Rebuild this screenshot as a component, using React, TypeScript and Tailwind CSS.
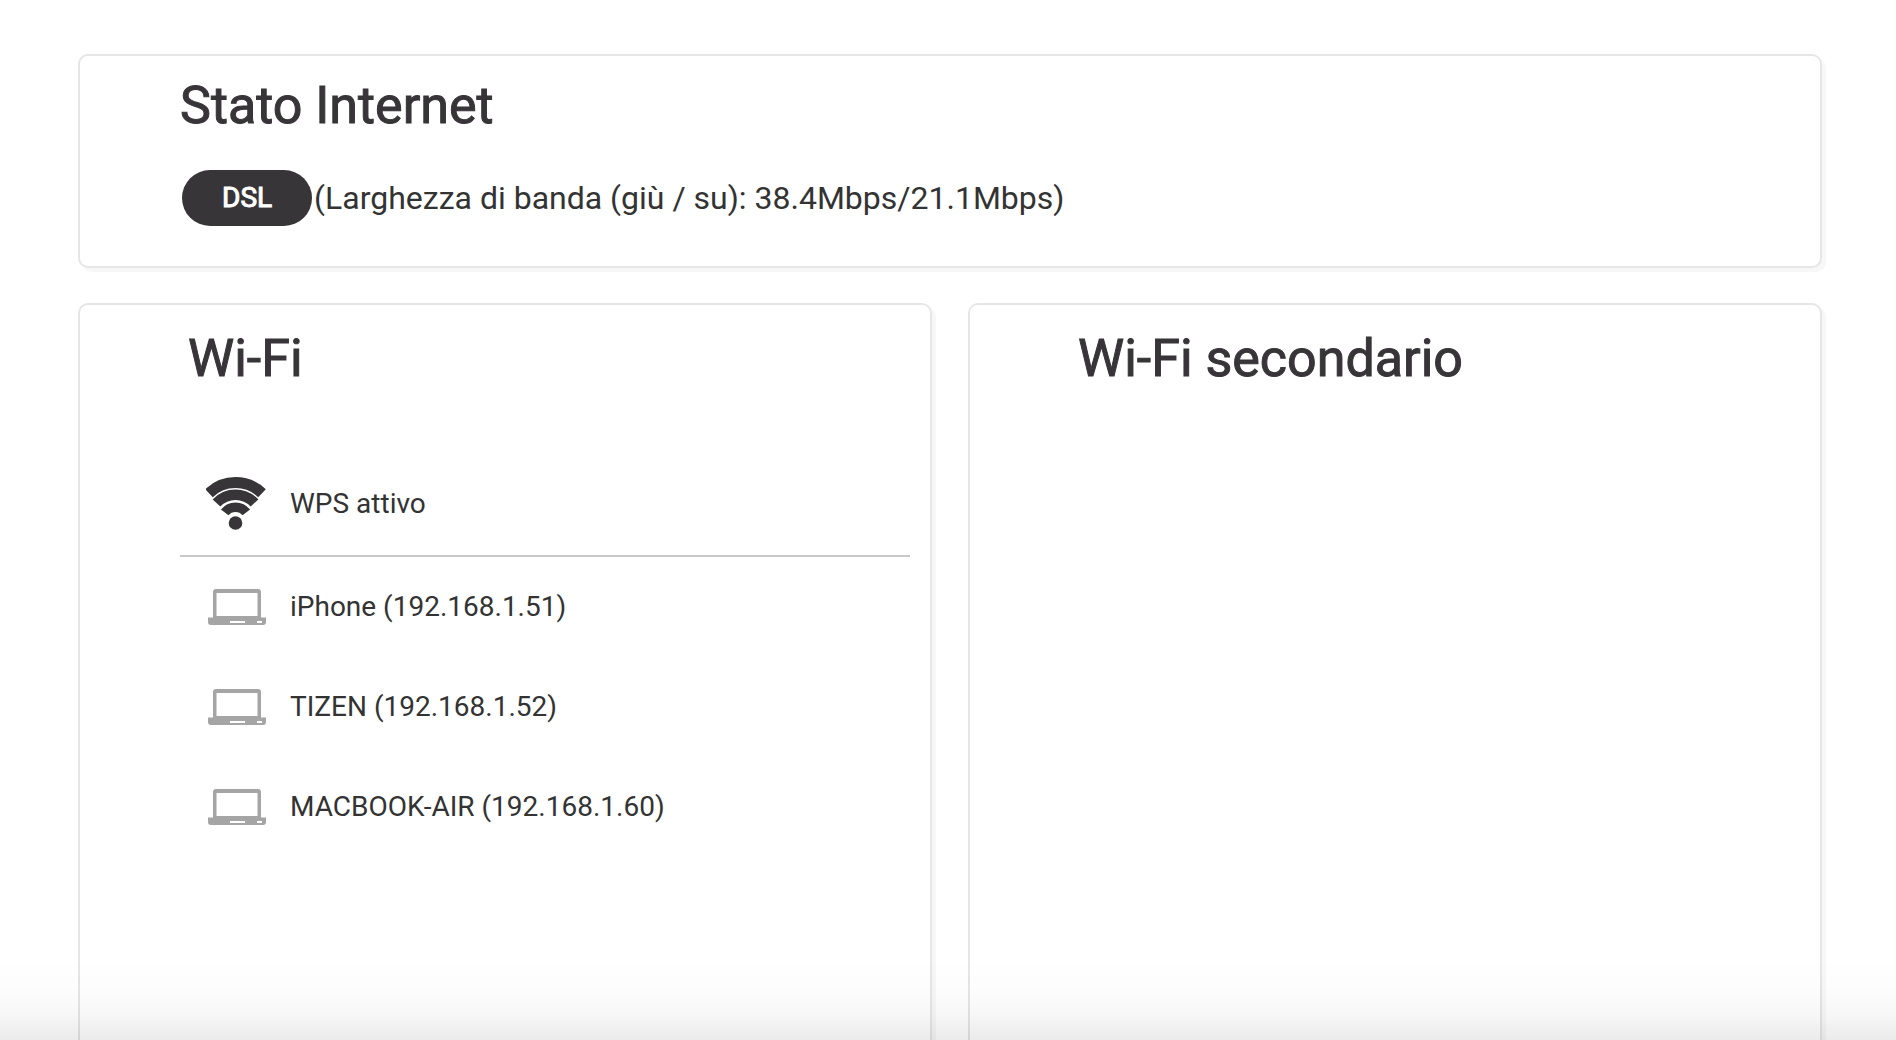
const devices = [
  { name: 'iPhone', ip: '192.168.1.51' },
  { name: 'TIZEN', ip: '192.168.1.52' },
  { name: 'MACBOOK-AIR', ip: '192.168.1.60' },
];

const card = 'rounded-[10px] border-2 border-[#e6e6e6] bg-white shadow-[4px_4px_0_#f7f7f7]';
const title = 'text-[52px] leading-[60px] font-normal text-[#373537] [-webkit-text-stroke:1px_#373537]';

function WifiIcon() {
  return (
    <svg viewBox="0 0 60 54" className="h-[54px] w-[60px] shrink-0" fill="none" stroke="#373537" aria-hidden="true">
      <path d="M3 16.2A38.3 38.3 0 0 1 56 16.2" strokeWidth="11" />
      <path d="M10.5 26A26 26 0 0 1 48.5 26" strokeWidth="10.5" />
      <path d="M18.7 35.4A13.7 13.7 0 0 1 40.3 35.4" strokeWidth="9.5" />
      <circle cx="29.5" cy="46" r="6.8" fill="#373537" stroke="none" />
    </svg>
  );
}

function LaptopIcon() {
  return (
    <svg viewBox="-2 0 60 36" className="h-9 w-[60px] shrink-0" fill="#a5a5a5" fillRule="evenodd" aria-hidden="true">
      <path d="M8 0H50Q53 0 53 3V29H5V3Q5 0 8 0ZM8.5 4V27H49.5V4Z" />
      <path d="M0 28.5H58V33Q58 36 55 36H3Q0 36 0 33ZM22 32V34H37V32ZM49 32V34H54V32Z" />
    </svg>
  );
}

export default function App() {
  return (
    <main className="flex min-h-screen flex-col gap-[35px] bg-white pt-[54px] pr-[74px] pl-[78px] font-[Roboto,sans-serif] text-[#333333]">
      <section className={`${card} pt-5 pr-5 pb-10 pl-[100px]`}>
        <h1 className={title}>Stato Internet</h1>
        <div className="mt-[34px] flex items-center gap-0.5 pl-0.5">
          <span className="rounded-full bg-[#373537] px-10 py-3 text-[28px] leading-8 text-white [-webkit-text-stroke:1px_white]">DSL</span>
          <p className="text-[32px] leading-10">(Larghezza di banda (giù / su): 38.4Mbps/21.1Mbps)</p>
        </div>
      </section>

      <div className="grid grow grid-cols-2 gap-9">
        <section className={`${card} rounded-b-none border-b-0 pt-6 pr-5 pb-10 pl-[100px]`}>
          <h2 className={`${title} pl-2`}>Wi-Fi</h2>
          <div className="mt-16 flex h-[104px] items-center gap-6 border-b-2 border-[#c8c8c8] pl-[26px] text-[28px] leading-8">
            <WifiIcon />
            <span>WPS attivo</span>
          </div>
          <ul className="text-[28px] leading-8">
            {devices.map((device) => (
              <li key={device.ip} className="flex h-[100px] items-center gap-6 pl-[26px]">
                <LaptopIcon />
                <span>{`${device.name} (${device.ip})`}</span>
              </li>
            ))}
          </ul>
        </section>
        <section className={`${card} rounded-b-none border-b-0 pt-6 pr-5 pb-10 pl-[100px]`}>
          <h2 className={`${title} pl-2`}>Wi-Fi secondario</h2>
        </section>
      </div>

      {/* fade along the bottom of the window */}
      <div className="pointer-events-none fixed inset-x-0 bottom-0 h-20 bg-[linear-gradient(to_bottom,transparent,rgba(0,0,0,0.01)_40%,rgba(0,0,0,0.03)_68%,rgba(0,0,0,0.08))]" />
    </main>
  );
}
